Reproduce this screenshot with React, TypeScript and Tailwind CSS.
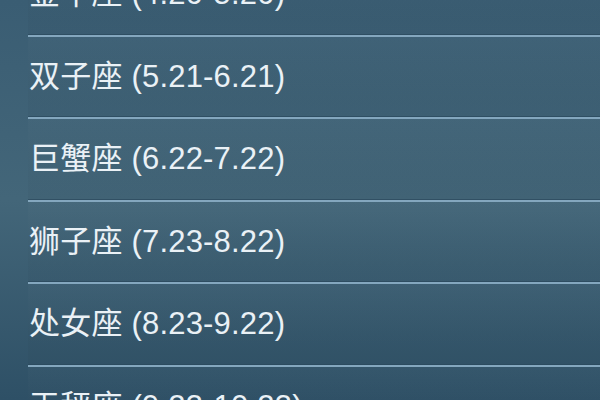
import React from "react";

const signs = [
  { name: "金牛座", range: "(4.20-5.20)" },
  { name: "双子座", range: "(5.21-6.21)" },
  { name: "巨蟹座", range: "(6.22-7.22)" },
  { name: "狮子座", range: "(7.23-8.22)" },
  { name: "处女座", range: "(8.23-9.22)" },
  { name: "天秤座", range: "(9.23-10.23)" },
];

export default function App() {
  return (
    <div className="w-[600px] h-[400px] overflow-hidden bg-gradient-to-b from-[#3a5d73] via-[#436679] to-[#2e5066]">
      <div className="-mt-[46px] pl-[28px]">
        {signs.map((s) => (
          <div key={s.name} className="flex flex-col">
            <div className="h-[79.5px] flex items-center pl-px bg-gradient-to-b from-white/[0.02] to-black/[0.03]">
              <span
                className="text-[31px] leading-none text-[#eaf1f6] whitespace-nowrap tracking-[0.2px]"
                style={{ fontFamily: '"Liberation Sans", "Noto Sans CJK SC", sans-serif' }}
              >
                {s.name} {s.range}
              </span>
            </div>
            <div className="h-px bg-[#2a475b]/70" />
            <div className="h-[2px] bg-[#84a7be]" />
          </div>
        ))}
      </div>
    </div>
  );
}
